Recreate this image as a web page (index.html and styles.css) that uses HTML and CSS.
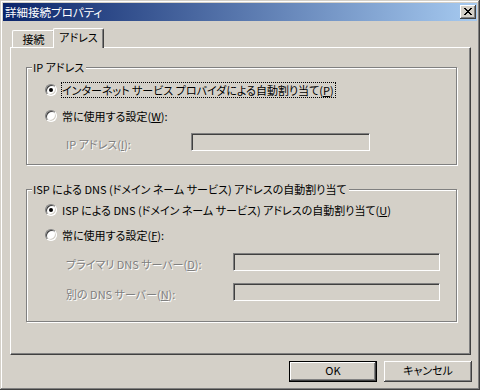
FILE: index.html
```html
<!DOCTYPE html>
<html lang="ja">
<head>
<meta charset="utf-8">
<link rel="stylesheet" href="styles.css">
</head>
<body>
<div class="window">
  <div class="titlebar">
    <span class="title">詳細接続プロパティ</span>
    <span class="close">
      <svg width="8" height="7" viewBox="0 0 8 7" shape-rendering="crispEdges"><path d="M0 0h2v1h-2zM6 0h2v1h-2zM1 1h2v1h-2zM5 1h2v1h-2zM2 2h4v1h-4zM3 3h2v1h-2zM2 4h4v1h-4zM1 5h2v1h-2zM5 5h2v1h-2zM0 6h2v1h-2zM6 6h2v1h-2z" fill="#000"/></svg>
    </span>
  </div>
  <div class="client">
    <div class="tabs">
      <div class="tab">接続</div>
      <div class="tab active">アドレス</div>
    </div>
    <div class="panel">
      <div class="group g1">
        <span class="legend">IP アドレス</span>
        <div class="row first">
          <span class="radio checked"></span>
          <span class="label focus">インターネット サービス プロバイダによる自動割り当て(<u>P</u>)</span>
        </div>
        <div class="row r2">
          <span class="radio"></span>
          <span class="label">常に使用する設定(<u>W</u>):</span>
        </div>
        <div class="field f-ip">
          <span class="flabel ip">IP アドレス(<u>I</u>):</span>
          <span class="input ip-input"></span>
        </div>
      </div>
      <div class="group g2">
        <span class="legend">ISP による DNS (ドメイン ネーム サービス) アドレスの自動割り当て</span>
        <div class="row first">
          <span class="radio checked"></span>
          <span class="label">ISP による DNS (ドメイン ネーム サービス) アドレスの自動割り当て(<u>U</u>)</span>
        </div>
        <div class="row r2">
          <span class="radio"></span>
          <span class="label">常に使用する設定(<u>F</u>):</span>
        </div>
        <div class="field f-dns1">
          <span class="flabel dns">プライマリ DNS サーバー(<u>D</u>):</span>
          <span class="input dns-input"></span>
        </div>
        <div class="field f-dns2">
          <span class="flabel dns">別の DNS サーバー(<u>N</u>):</span>
          <span class="input dns-input"></span>
        </div>
      </div>
    </div>
    <div class="buttons">
      <span class="btn default"><span class="btn-in">OK</span></span>
      <span class="btn"><span class="btn-in">キャンセル</span></span>
    </div>
  </div>
</div>
</body>
</html>
```

FILE: styles.css
```css
* { box-sizing: border-box; }
html, body { margin: 0; padding: 0; }
body {
  background: #d4d0c8;
  font-family: "Noto Sans CJK JP", "Noto Sans", sans-serif;
  font-size: 11px;
  font-weight: 400;
  font-feature-settings: "palt";
  color: #000;
  line-height: 14px;
}
u { text-decoration: underline; text-underline-offset: 1px; }

.window {
  width: 480px;
  height: 390px;
  padding: 3px;
  background: #d4d0c8;
  box-shadow: inset -1px -1px 0 #404040, inset 1px 1px 0 #d4d0c8,
              inset -2px -2px 0 #808080, inset 2px 2px 0 #ffffff;
  display: flex;
  flex-direction: column;
}

.titlebar {
  height: 18px;
  background: linear-gradient(to right, #0a246a, #a6caf0);
  display: flex;
  align-items: flex-start;
  justify-content: space-between;
  padding-left: 2px;
}
.title {
  color: #fff;
  font-size: 11.5px;
  line-height: 18px;
}
.close {
  width: 16px;
  height: 14px;
  margin: 2px 1px 0 0;
  background: #d4d0c8;
  box-shadow: inset -1px -1px 0 #404040, inset 1px 1px 0 #ffffff,
              inset -2px -2px 0 #808080;
  display: flex;
  align-items: flex-start;
  justify-content: flex-start;
  padding: 3px 0 0 4px;
}
.close svg { display: block; }

.client {
  padding: 7px 6px 0 7px;
  display: flex;
  flex-direction: column;
}

.tabs {
  height: 19px;
  display: flex;
  align-items: flex-end;
  padding-left: 2px;
}
.tab {
  height: 17px;
  width: 43px;
  border-left: 1px solid #fff;
  border-top: 1px solid #fff;
  border-right: 1px solid #404040;
  border-top-left-radius: 2px;
  border-top-right-radius: 2px;
  box-shadow: inset -1px 0 0 #808080;
  text-align: center;
  line-height: 15px;
  padding-top: 1px;
}
.tab.active {
  position: relative;
  z-index: 1;
  height: 20px;
  width: 51px;
  margin-left: -2px;
  margin-right: -2px;
  margin-bottom: -1px;
  background: #d4d0c8;
  padding-top: 1px;
  line-height: 14px;
}

.panel {
  height: 308px;
  border: 1px solid;
  border-color: #fff #404040 #404040 #fff;
  box-shadow: inset -1px -1px 0 #808080;
  padding: 19px 13px 0 15px;
  display: flex;
  flex-direction: column;
}

.group {
  position: relative;
  border: 1px solid #808080;
  box-shadow: 1px 1px 0 #fff, inset 1px 1px 0 #fff;
  display: flex;
  flex-direction: column;
  padding-left: 18px;
}
.g1 { height: 98px; padding-top: 14px; }
.g2 { height: 133px; padding-top: 12px; margin-top: 24px; }

.legend {
  position: absolute;
  top: -8px;
  left: 5px;
  padding: 0 2px 0 1px;
  background: #d4d0c8;
  line-height: 14px;
  white-space: nowrap;
}

.row {
  height: 16px;
  display: flex;
  align-items: center;
}
.g1 .r2 { margin-top: 10px; }
.g2 .r2 { margin-top: 9px; }

.radio {
  width: 12px;
  height: 12px;
  border-radius: 50%;
  background: #fff;
  border: 1px solid;
  border-color: #808080 #fff #fff #808080;
  box-shadow: inset 1px 1px 0 #404040, inset -1px -1px 0 #d4d0c8;
  display: flex;
  align-items: center;
  justify-content: center;
  flex: none;
}
.radio.checked::after {
  content: "";
  width: 4px;
  height: 4px;
  border-radius: 50%;
  background: #000;
}
.label {
  margin-left: 4px;
  border: 1px dotted transparent;
  padding: 0 1px 0 0;
  line-height: 14px;
  white-space: nowrap;
}
.label.focus { border-color: #000; }

.field {
  height: 18px;
  display: flex;
  align-items: center;
  padding-left: 21px;
}
.f-ip { margin-top: 9px; }
.f-dns1 { margin-top: 10px; }
.f-dns2 { margin-top: 12px; }
.flabel {
  color: #808080;
  text-shadow: 1px 1px 0 #fff;
  white-space: nowrap;
  padding-top: 3px;
}
.flabel.ip { width: 125px; }
.flabel.dns { width: 167px; }
.input {
  height: 18px;
  border: 1px solid;
  border-color: #808080 #fff #fff #808080;
  box-shadow: inset 1px 1px 0 #404040, inset -1px -1px 0 #d4d0c8;
  background: #d4d0c8;
}
.ip-input { width: 179px; }
.dns-input { width: 207px; }

.buttons {
  margin-top: 6px;
  margin-right: -1px;
  display: flex;
  justify-content: flex-end;
  gap: 7px;
}
.btn {
  width: 88px;
  height: 21px;
  background: #d4d0c8;
  box-shadow: inset -1px -1px 0 #404040, inset 1px 1px 0 #ffffff,
              inset -2px -2px 0 #808080;
  display: flex;
}
.btn.default {
  border: 1px solid #000;
}
.btn-in {
  flex: 1;
  text-align: center;
  line-height: 19px;
}
.btn.default .btn-in { line-height: 17px; }
```
